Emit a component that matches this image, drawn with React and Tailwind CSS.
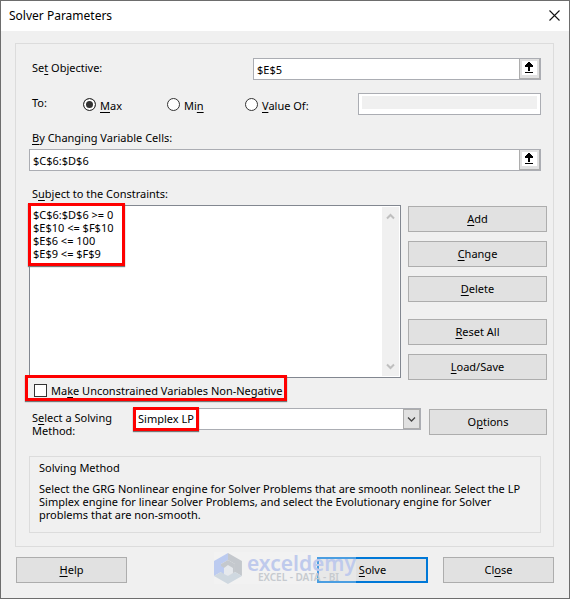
const constraints = ["$C$6:$D$6 >= 0", "$E$10 <= $F$10", "$E$6 <= 100", "$E$9 <= $F$9"];

const Key = ({ children }) => <span className="underline underline-offset-2">{children}</span>;

const DialogButton = ({ children, className = "", primary = false }) => (
  <button
    type="button"
    className={`h-[26px] bg-[#e1e1e1] pb-px text-center ${primary ? "border-2 border-[#0078d7]" : "border border-[#adadad]"} ${className}`}
  >
    {children}
  </button>
);

const RangeField = ({ id, value, className = "" }) => (
  <div className={`flex h-[22px] border border-[#abadb3] bg-white ${className}`}>
    <input id={id} defaultValue={value} className="min-w-0 flex-1 px-[3px] outline-none" />
    <button
      type="button"
      aria-label="Collapse dialog"
      className="flex w-[21px] items-start justify-center border-r border-b border-l border-[#adadad] bg-[#e1e1e1] pt-[2px]"
    >
      <svg width="15" height="14" viewBox="0 0 15 14" shapeRendering="crispEdges" aria-hidden="true">
        <path d="M0 0h15v14H0z" fill="#fff" />
        <path d="M6 1h2v1h1v1h1v1h1v2H8v4H6V6H3V4h1V3h1V2h1zM3 11h8v1H3z" fill="#000" />
      </svg>
    </button>
  </div>
);

const RadioOption = ({ children, className = "", ...props }) => (
  <label className={`flex items-center gap-1 ${className}`}>
    <input
      type="radio"
      name="target"
      className="size-[13px] shrink-0 appearance-none rounded-full border border-[#333] bg-white checked:bg-[#333] checked:shadow-[inset_0_0_0_2px_white]"
      {...props}
    />
    <span className="pt-[2px] whitespace-nowrap">{children}</span>
  </label>
);

const Chevron = ({ up = false, thin = false }) => (
  <svg width="9" height="7" viewBox="0 0 9 7" aria-hidden="true">
    <path
      d={up ? "M1 5.5 4.5 2 8 5.5" : "M1 1.5 4.5 5 8 1.5"}
      fill="none"
      stroke="currentColor"
      strokeWidth={thin ? 1.3 : 2}
    />
  </svg>
);

const Highlight = ({ className }) => (
  <div className={`pointer-events-none absolute border-3 border-[#fe0000] shadow-[0_1px_1px_#777] ${className}`} />
);

const Watermark = () => (
  <div className="pointer-events-none absolute top-[-5px] left-[198px] flex h-8 w-[142px] items-center gap-[5px] bg-[#f8f8f8]/30">
    <svg width="28" height="31" viewBox="0 0 28 31" aria-hidden="true">
      <path d="M14 0 0 8v15l7-4v-8l7-4z" fill="#bccbf0" />
      <path d="M14 0l14 8v15l-7-4v-8l-7-4z" fill="#c4c8cd" />
      <path d="M0 23l14 8 14-8-7-4-7 4-7-4z" fill="#cfd8e0" />
      <path d="M7 11l7-4 7 4v8l-7 4-7-4z" fill="#c4c8cd" />
      <path d="M7 13l7 4v6l-7-4z" fill="#bccbf0" />
      <path d="M14 12l5 3v5l-5 3-4-2v-6z" fill="#e6e9ed" />
    </svg>
    <div className="font-['Noto_Sans',sans-serif] font-semibold">
      <div className="text-[21px] leading-[19px] text-[#bfcaec]">exceldemy</div>
      <div className="pl-[11px] text-[10px] leading-[9px] whitespace-nowrap text-[#c6cacf]">EXCEL - DATA - BI</div>
    </div>
  </div>
);

const App = () => (
  <main className="border border-[#6d6d6d] bg-[#f0f0f0] font-['Noto_Sans',sans-serif] text-[11px] leading-[13px] text-black">
    <header className="flex h-[30px] items-center justify-between bg-white pr-[9px] pb-px pl-2">
      <h1 className="text-[12px]">Solver Parameters</h1>
      <button type="button" aria-label="Close dialog">
        <svg width="11" height="11" viewBox="0 0 11 11" aria-hidden="true">
          <path d="M.5.5l10 10M10.5.5l-10 10" stroke="#111" strokeWidth="1.1" />
        </svg>
      </button>
    </header>

    <section className="mt-3 mr-[15px] ml-[14px] border border-[#dcdcdc] pt-[14px] pr-[6px] pb-[13px] pl-[13px]">
      <div className="mr-[6px] flex items-center">
        <label htmlFor="objective" className="w-[224px] pb-[3px] pl-[3px]">
          Se<Key>t</Key> Objective:
        </label>
        <RangeField id="objective" value="$E$5" className="flex-1" />
      </div>

      <fieldset className="mt-[13px] mr-[6px] flex items-center">
        <legend className="float-left w-[54px] pb-[3px] pl-[3px]">To:</legend>
        <RadioOption className="w-[84px]" defaultChecked>
          <Key>M</Key>ax
        </RadioOption>
        <RadioOption className="w-[78px]">
          Mi<Key>n</Key>
        </RadioOption>
        <RadioOption className="w-[113px]">
          <Key>V</Key>alue Of:
        </RadioOption>
        <div className="h-[22px] flex-1 border border-[#abadb3] bg-white px-[3px] pt-[2px]">
          <input disabled aria-label="Target value" className="block h-[13px] w-full bg-[#f0f0f0]" />
        </div>
      </fieldset>

      <label htmlFor="variables" className="mt-[15px] mb-[3px] block pl-[3px] leading-4">
        <Key>B</Key>y Changing Variable Cells:
      </label>
      <RangeField id="variables" value="$C$6:$D$6" className="mr-[6px]" />

      <label htmlFor="constraints" className="mt-[15px] mb-[3px] block pl-[3px] leading-4">
        S<Key>u</Key>bject to the Constraints:
      </label>
      <div className="flex gap-[7px]">
        <div className="relative flex h-[173px] flex-1 border border-[#828790] bg-white p-px">
          <select
            id="constraints"
            size={12}
            className="min-w-0 flex-1 appearance-none overflow-hidden pl-[2px] leading-[13px] outline-none"
          >
            {constraints.map((item) => (
              <option key={item} className="h-[13px] min-h-0 p-0 leading-[13px]">
                {item}
              </option>
            ))}
          </select>
          <div className="flex w-[17px] flex-col items-center justify-between bg-[#f0f0f0] py-[6px] text-[#bfbfbf]">
            <Chevron up />
            <Chevron />
          </div>
          <Highlight className="top-[-3px] left-[-2px] h-[63px] w-[97px]" />
        </div>
        <div className="flex w-[139px] flex-col pt-px">
          <DialogButton>
            <Key>A</Key>dd
          </DialogButton>
          <DialogButton className="mt-[9px]">
            <Key>C</Key>hange
          </DialogButton>
          <DialogButton className="mt-[9px]">
            <Key>D</Key>elete
          </DialogButton>
          <DialogButton className="mt-[17px]">
            <Key>R</Key>eset All
          </DialogButton>
          <DialogButton className="mt-[9px]">
            <Key>L</Key>oad/Save
          </DialogButton>
        </div>
      </div>

      <div className="relative mt-1 flex">
        <label className="flex items-center gap-1 pl-[5px]">
          <input type="checkbox" className="size-[13px] appearance-none border border-[#333] bg-white" />
          <span>
            Ma<Key>k</Key>e Unconstrained Variables Non-Negative
          </span>
        </label>
        <Highlight className="top-[-9px] left-[-4px] h-[26px] w-[262px]" />
      </div>

      <div className="mt-[11px] flex items-start">
        <label htmlFor="method" className="w-[105px] pt-[3px] pb-px pl-[3px]">
          S<Key>e</Key>lect a Solving
          <br />
          Method:
        </label>
        <div className="relative flex h-[22px] flex-1 border border-[#abadb3] bg-white">
          <select id="method" className="min-w-0 flex-1 appearance-none pb-px pl-[3px] outline-none">
            <option>Simplex LP</option>
            <option>GRG Nonlinear</option>
            <option>Evolutionary</option>
          </select>
          <div className="pointer-events-none absolute inset-y-0 right-0 flex w-[17px] items-center justify-center border border-[#adadad] bg-[#e1e1e1] text-[#444]">
            <Chevron thin />
          </div>
          <Highlight className="top-[-2px] left-[-2px] h-6 w-[66px]" />
        </div>
        <DialogButton className="mt-px ml-2 w-[118px]">
          O<Key>p</Key>tions
        </DialogButton>
      </div>

      <section className="mt-[18px] mr-[6px] h-[77px] border border-[#dcdcdc] px-[9px] pt-1">
        <h2>Solving Method</h2>
        <p className="mt-2">
          Select the GRG Nonlinear engine for Solver Problems that are smooth nonlinear. Select the LP Simplex engine
          for linear Solver Problems, and select the Evolutionary engine for Solver problems that are non-smooth.
        </p>
      </section>
    </section>

    <footer className="relative mt-[10px] mr-[15px] mb-[15px] ml-[15px] flex">
      <DialogButton className="w-[111px]">
        <Key>H</Key>elp
      </DialogButton>
      <DialogButton primary className="ml-auto w-[111px]">
        <Key>S</Key>olve
      </DialogButton>
      <DialogButton className="ml-[15px] w-[111px]">
        Cl<Key>o</Key>se
      </DialogButton>
      <Watermark />
    </footer>
  </main>
);

export default App;
